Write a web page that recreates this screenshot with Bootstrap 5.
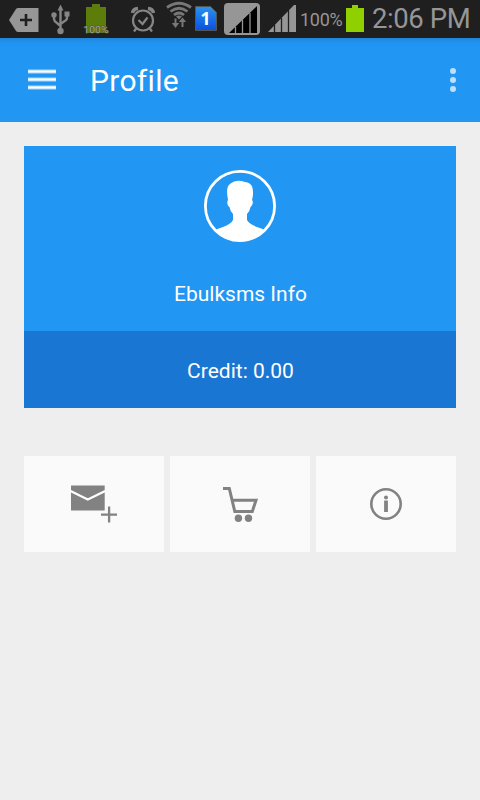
<!DOCTYPE html>
<html lang="en">
<head>
<meta charset="utf-8">
<meta name="viewport" content="width=device-width, initial-scale=1">
<title>Profile</title>
<link href="https://cdn.jsdelivr.net/npm/bootstrap@5.3.0/dist/css/bootstrap.min.css" rel="stylesheet">
<style>
body{font-family:Roboto,"Noto Sans",sans-serif;background:#eee;min-height:800px}
svg{display:block;flex:none}
.status{height:38px;background:#1f1f1f;color:#969696}
.status span{white-space:nowrap;flex:none}
.pct{width:44px;padding-left:1px;font-size:18px;line-height:40px;letter-spacing:-.3px}
.clock{padding-left:3px;font-size:27.5px;line-height:38px;letter-spacing:-.4px}
.appbar{height:84px;padding:0 24px 0 28px;background:linear-gradient(#1e86d9 0,#2091ef 4px,#2196f3 10px)}
.appbar h1{font-size:30px;line-height:36px;margin-left:34px;padding-top:2px;letter-spacing:.3px}
.profile{margin:24px 24px 0;background:#2196f3;font-size:21px}
.who{height:185px;padding-top:24px}
.who-name{margin-top:36px;padding-left:1px;line-height:32px}
.credit{height:77px;background:#1976d2;padding:4px 0 0 1px}
.tiles{margin:48px 24px 0;gap:6px}
.tile{height:96px;background:#fafafa;border:0;padding:0}
</style>
<script src="https://cdn.jsdelivr.net/npm/bootstrap@5.3.0/dist/js/bootstrap.bundle.min.js"></script>
</head>
<body class="overflow-hidden">
<div class="status d-flex overflow-hidden">
  <svg width="46" height="38" viewBox="0 0 46 38"><path d="M9 20 16 9Q17 8 18 8H38.5V32H18Q17 32 16 31Z" fill="#969696"/><path d="M20 20H32M26 14V26" stroke="#1f1f1f" stroke-width="2.6"/></svg>
  <svg width="30" height="38" viewBox="46 0 30 38" fill="none" stroke="#858585" stroke-width="2.4"><path d="M60.500 9V30M54 15V19Q54 21 57 23L60.500 26M67 15V18Q67 20 64 21.500L60.500 24"/><path d="M60.500 4.500 63.500 10.500H57.500ZM64.500 11.500H69.500V16.500H64.500Z" fill="#858585" stroke="none"/><circle cx="54" cy="15" r="2.700" fill="#858585" stroke="none"/><circle cx="60.500" cy="31" r="3.200" fill="#858585" stroke="none"/></svg>
  <svg width="48" height="38" viewBox="76 0 48 38"><path d="M92 4H100V7H106V33H86V7H92Z" fill="#5c7d0a"/><text x="83.500" y="32.500" font-size="9.500" textLength="25" lengthAdjust="spacingAndGlyphs" fill="#a5a5a5" stroke="#4a5a25" stroke-width="1" paint-order="stroke">100%</text></svg>
  <svg width="38" height="38" viewBox="124 0 38 38" fill="none" stroke="#858585" stroke-width="2.2"><circle cx="143" cy="20.500" r="10"/><path d="M138.500 20 142.500 24 147.500 17.500M136.500 28 134 31.500M149.500 28 152 31.500"/><path d="M132.500 13Q133 9 138 8.500M153.500 13Q153 9 148 8.500" stroke-width="3.5"/></svg>
  <svg width="32" height="38" viewBox="162 0 32 38" fill="none" stroke="#777" stroke-width="2.800"><path d="M167 7.500Q179 -1 191 7.500M170.500 11.500Q179 5 187.500 11.500M174 15Q179 11 184 15"/><path d="M176 16.500Q179 14.500 182 16.500L179 19.500Z" fill="#777" stroke="none"/><path d="M175.500 18.500V25M182.500 27V20" stroke-width="2"/><path d="M171.800 23H179.200L175.500 28ZM178.800 22H186.200L182.500 17.500Z" fill="#777" stroke="none"/></svg>
  <svg width="26" height="38" viewBox="194 0 26 38"><defs><linearGradient id="sim" x1="0" y1="0" x2="0" y2="1"><stop stop-color="#2a92ee"/><stop offset="1" stop-color="#0851df"/></linearGradient></defs><path d="M195.500 6.500H210.500L216.500 12.500V30.500H195.500Z" fill="url(#sim)" stroke="#555"/><text x="200.500" y="25" font-size="17.500" font-weight="700" font-family="Open Sans, sans-serif" fill="#fff">1</text></svg>
  <svg width="44" height="38" viewBox="220 0 44 38"><rect x="224" y="3" width="36" height="32" rx="4" fill="#969696"/><path d="M229 33 257 6V33Z" fill="#000"/><path d="M235.500 27V33M242.500 20V33M250 13V33" stroke="#969696" stroke-width="1.300"/></svg>
  <svg width="35" height="38" viewBox="264 0 35 38"><path d="M268 32 294 5H296V32Z" fill="#969696"/><path d="M274.500 25V32M281.500 18V32M288.500 10V32" stroke="#1f1f1f" stroke-width="1.300"/></svg>
  <span class="pct">100%</span>
  <svg width="26" height="38" viewBox="343 0 26 38"><path d="M352 5H358V8H364V32H346V8H352Z" fill="#91d000"/></svg>
  <span class="clock">2:06 PM</span>
</div>
<header class="appbar d-flex align-items-center text-white">
  <svg width="28" height="22" viewBox="28 69 28 22"><path d="M28 71.500H56M28 79.500H56M28 87.500H56" stroke="#a5d5fa" stroke-width="4"/><path d="M28 71.500H56M28 79.500H56M28 87.500H56" stroke="#fff" stroke-width="2"/></svg>
  <h1 class="fw-normal mb-0">Profile</h1>
  <svg class="ms-auto" width="6" height="24" viewBox="0 0 6 24" fill="#bce0fb"><circle cx="3" cy="3" r="3"/><circle cx="3" cy="12" r="3"/><circle cx="3" cy="21" r="3"/></svg>
</header>
<main>
  <section class="profile text-white text-center">
    <div class="who d-flex flex-column align-items-center">
      <svg width="72" height="72" viewBox="204 170 72 72"><clipPath id="disc"><circle cx="240" cy="206" r="35"/></clipPath><circle cx="240" cy="206" r="34.600" fill="none" stroke="#fff" stroke-width="2.800"/><path clip-path="url(#disc)" fill="#fff" d="M210 232Q217 229 223 227Q231 224 233 220V214Q230 211 229.500 207C227.500 206 226.500 202 228 200C226.500 192 226.500 186 230.500 183.500Q236 179 245 182Q250.500 182.500 252.300 187C253.500 192 253 197 252 200C254 202 252 206 250.500 207Q250 211 247 214V220Q249 224 257 227Q263 229 270 232V246H210Z"/></svg>
      <div class="who-name">Ebulksms Info</div>
    </div>
    <div class="credit d-flex align-items-center justify-content-center">Credit: 0.00</div>
  </section>
  <nav class="tiles d-flex" aria-label="Actions">
    <button class="tile flex-fill d-flex justify-content-center align-items-center" aria-label="New message"><svg width="140" height="96" viewBox="24 456 140 96"><path d="M71 485.500H104.700V510.500H71Z" fill="#828282"/><path d="M70.500 491 87.800 499.500 105.200 491" fill="none" stroke="#fff" stroke-width="2.200"/><path d="M101 514.600H117M109.100 506.500V522.500" stroke="#828282" stroke-width="2.300"/></svg></button>
    <button class="tile flex-fill d-flex justify-content-center align-items-center" aria-label="Buy credit"><svg width="140" height="96" viewBox="170 456 140 96"><path d="M223 488.500H229.300L234.800 511.500H252.300L256 500.200H232" fill="none" stroke="#828282" stroke-width="3"/><circle cx="238.400" cy="518.300" r="3.700" fill="#828282"/><circle cx="248.500" cy="518.300" r="3.700" fill="#828282"/></svg></button>
    <button class="tile flex-fill d-flex justify-content-center align-items-center" aria-label="Information"><svg width="140" height="96" viewBox="316 456 140 96"><circle cx="386" cy="504" r="14.700" fill="none" stroke="#828282" stroke-width="2.600"/><circle cx="386" cy="497.500" r="2" fill="#828282"/><path d="M386 500.500V512" stroke="#828282" stroke-width="3.800"/></svg></button>
  </nav>
</main>
</body>
</html>
